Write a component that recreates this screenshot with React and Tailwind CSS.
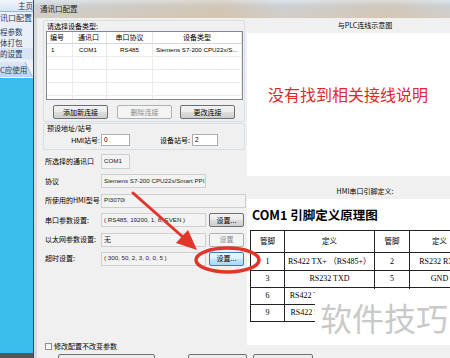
import React from "react";

const ui = "font-['Liberation_Sans','Noto_Sans_CJK_SC',sans-serif]";
const cjk = "font-['Noto_Sans_CJK_SC',sans-serif]";
const serif = "font-['Liberation_Serif','Noto_Sans_CJK_SC',serif]";

const btnBase =
  "h-[14px] shrink-0 rounded-[2px] border flex items-center justify-center text-[7px] leading-none";
const btnLook = {
  normal:
    "border-[#707070] bg-[linear-gradient(#f2f2f2,#ebebeb_50%,#dddddd_50%,#cfcfcf)] text-black",
  disabled: "border-[#adb2b5] bg-[#f4f4f4] text-[#8a8a8a]",
  hot: "border-[#3c7fb1] bg-[linear-gradient(#eaf6fd,#d9f0fc_50%,#bee6fd_50%,#a7d9f5)] text-black",
};

function WinButton({ label, kind = "normal", className = "" }) {
  return <div className={`${btnBase} ${btnLook[kind]} ${className}`}>{label}</div>;
}

function Sidebar() {
  return (
    <div className={`w-[33px] shrink-0 flex flex-col ${cjk} text-[7.5px] text-[#1d3a63]`}>
      <div className="h-[12px] bg-[linear-gradient(#f3f7fc,#d5e3f3)] border-b border-[#9fb7d4] flex items-center pl-[18px] leading-none">
        主页
      </div>
      <div className="h-[50px] bg-[#e8eff8] flex flex-col overflow-hidden leading-none">
        <div className="h-[11px] flex items-center whitespace-nowrap text-[8px]">讯口配置</div>
        <div className="h-[3px]" />
        <div className="h-[11px] flex items-center whitespace-nowrap">程参数</div>
        <div className="h-[11px] flex items-center whitespace-nowrap">体打包</div>
        <div className="h-[11px] flex items-center whitespace-nowrap bg-[#d7e4f3]">的设置</div>
      </div>
      <div className="relative h-[16px] bg-[linear-gradient(#dbe8f7,#bcd3ee)] flex items-center leading-none border-b border-white overflow-hidden">
        <span className="whitespace-nowrap">C应使用</span>
        <svg className="absolute right-0 top-0" width="10" height="16">
          <polygon points="2,0 10,0 10,16" fill="#eaf2fb" />
          <line x1="2" y1="0" x2="10" y2="16" stroke="#9fb7d4" />
        </svg>
      </div>
      <div className="flex-1 bg-[#3abdea]" />
      <div className="h-[5px] bg-[#4f565e]" />
    </div>
  );
}

function ListView() {
  const cols = ["w-[26px]", "w-[34px]", "w-[46px]", "w-[89px]"];
  const head = [
    ["编号", "justify-start pl-[3px]"],
    ["通讯口", "justify-start pl-[5px]"],
    ["串口协议", "justify-center"],
    ["设备类型", "justify-center"],
  ];
  const first = [
    ["1", "justify-start pl-[4px]"],
    ["COM1", "justify-start pl-[6px]"],
    ["RS485", "justify-center"],
    ["Siemens S7-200 CPU22x/S...", "justify-start pl-[3px]"],
  ];
  return (
    <div className="ml-[2px] w-[197px] h-[69px] border border-[#828790] bg-white overflow-hidden">
      <div className="h-[12px] flex border-b border-[#d5d5d5]">
        {head.map(([t, a], i) => (
          <div key={t} className={`${cols[i]} flex items-center ${a} border-r border-[#e5e5e5] text-[7px] leading-none ${cjk}`}>
            {t}
          </div>
        ))}
      </div>
      <div className="h-[13px] flex border-b border-[#ececec]">
        {first.map(([t, a], i) => (
          <div key={t} className={`${cols[i]} flex items-center ${a} border-r border-[#ececec] text-[6.2px] leading-none whitespace-nowrap overflow-hidden`}>
            {t}
          </div>
        ))}
      </div>
      {[0, 1, 2, 3].map((r) => (
        <div key={r} className="h-[13px] flex border-b border-[#ececec]">
          {cols.map((w, i) => (
            <div key={i} className={`${w} border-r border-[#ececec]`} />
          ))}
        </div>
      ))}
    </div>
  );
}

const fieldBox =
  "h-[14px] border border-[#cfcfcf] bg-[#f3f3f3] flex items-center pl-[2px] text-[6.2px] text-[#222] whitespace-nowrap overflow-hidden leading-none";

function Row({ h, label, children }) {
  return (
    <div className={`${h} flex items-center`}>
      <div className={`w-[64px] shrink-0 pl-[8px] text-[7px] leading-none whitespace-nowrap ${cjk}`}>{label}</div>
      {children}
    </div>
  );
}

function LeftForm() {
  return (
    <div className="w-[210px] shrink-0 flex flex-col text-black">
      <div className="mt-[2px] ml-[6px] w-[202px] h-[102px] border border-[#d5dfe5] rounded-[2px] flex flex-col">
        <div className={`h-[10px] pl-[3px] text-[7px] leading-[10px] ${cjk}`}>请选择设备类型:</div>
        <ListView />
        <div className={`mt-[5px] flex pl-[9px] ${cjk}`}>
          <WinButton label="添加新连接" className="w-[55px]" />
          <WinButton label="删除连接" kind="disabled" className="w-[55px] ml-[9px]" />
          <WinButton label="更改连接" className="w-[55px] ml-[8px]" />
        </div>
      </div>

      <div className="mt-[1px] ml-[6px] w-[202px] h-[27px] border border-[#d5dfe5] rounded-[2px] flex flex-col">
        <div className={`h-[7px] mt-[1px] pl-[3px] text-[7px] leading-[7px] ${cjk}`}>预设地址/站号</div>
        <div className="mt-[2px] flex items-center h-[12px]">
          <div className="w-[56px] text-right text-[7px] leading-none">HMI站号:</div>
          <div className="ml-[1px] w-[29px] h-[12px] border border-[#abadb3] bg-white flex items-center pl-[2px] text-[6.5px] leading-none">0</div>
          <div className={`w-[60px] text-right text-[7px] leading-none ${cjk}`}>设备站号:</div>
          <div className="ml-[2px] w-[26px] h-[12px] border border-[#abadb3] bg-white flex items-center pl-[2px] text-[6.5px] leading-none">2</div>
        </div>
      </div>

      <div className="mt-[2px] flex flex-col">
        <Row h="h-[19px]" label="所选择的通讯口">
          <div className={`${fieldBox} w-[29px] h-[15px]`}>COM1</div>
        </Row>
        <Row h="h-[20px]" label="协议">
          <div className={`${fieldBox} w-[105px]`}>Siemens S7-200 CPU22x/Smart PPI</div>
        </Row>
        <Row h="h-[19px]" label="所使用的HMI型号">
          <div className={`${fieldBox} w-[145px] h-[13px]`}>PI3070i</div>
        </Row>
        <Row h="h-[20px]" label="串口参数设置:">
          <div className={`${fieldBox} w-[105px]`}>( RS485, 19200, 1, 8, EVEN )</div>
          <WinButton label="设置..." className={`w-[35px] ml-[3px] ${cjk}`} />
        </Row>
        <Row h="h-[19px]" label="以太网参数设置:">
          <div className={`${fieldBox} w-[105px] ${cjk} text-[7px]`}>无</div>
          <WinButton label="设置" kind="disabled" className={`w-[35px] ml-[3px] ${cjk}`} />
        </Row>
        <Row h="h-[19px]" label="超时设置:">
          <div className={`${fieldBox} w-[105px]`}>( 300, 50, 2, 3, 0, 0, 5 )</div>
          <WinButton label="设置..." kind="hot" className={`w-[35px] ml-[3px] h-[12px] ${cjk}`} />
        </Row>
      </div>

      <div className="flex-1" />
      <div className="h-[7px] mb-[4px] flex items-center pl-[8px]">
        <div className="w-[7px] h-[7px] border border-[#8f8f8f] bg-[linear-gradient(#f0f0f0,#fafafa)]" />
        <span className={`ml-[2px] text-[7px] leading-none ${cjk}`}>修改配置不改变参数</span>
      </div>
    </div>
  );
}

function PinTable() {
  const rows = [
    ["1", "RS422 TX+ （RS485+）", "2", "RS232 RXD"],
    ["3", "RS232 TXD", "5", "GND"],
    ["6", "RS422 TX- （RS485-）", "7", "RS422 RX-"],
    ["9", "RS422 RX-（RS485-）", "8", ""],
  ];
  const heights = ["h-[18px]", "h-[17px]", "h-[17px]", "h-[17px]"];
  const cell = "border border-[#222] text-center align-middle p-0 whitespace-nowrap overflow-hidden";
  return (
    <table className={`ml-[3px] mt-[8px] border-collapse table-fixed w-[219px] text-[8px] leading-none ${serif}`}>
      <colgroup>
        <col className="w-[34px]" />
        <col className="w-[90px]" />
        <col className="w-[35px]" />
        <col className="w-[60px]" />
      </colgroup>
      <tbody>
        <tr className="h-[22px]">
          {["管脚", "定义", "管脚", "定义"].map((t, i) => (
            <td key={i} className={`${cell} text-[7.5px]`}>{t}</td>
          ))}
        </tr>
        {rows.map((r, i) => (
          <tr key={i} className={heights[i]}>
            {r.map((t, j) => (
              <td key={j} className={cell}>{t}</td>
            ))}
          </tr>
        ))}
      </tbody>
    </table>
  );
}

function RightPanel() {
  return (
    <div className={`w-[236px] shrink-0 flex flex-col ${cjk}`}>
      <div className="h-[15px] flex items-center justify-center text-[7px] leading-none">与PLC连线示意图</div>
      <div className="h-[143px] bg-white pt-[53px] pl-[21px] text-[16px] leading-[16px] text-[#e02a2a] whitespace-nowrap">
        没有找到相关接线说明
      </div>
      <div className="h-[23px] pt-[11px] text-center text-[7px] leading-[8px]">HMI串口引脚定义:</div>
      <div className="h-[146px] bg-white overflow-hidden">
        <div className="pt-[9px] pl-[5px] text-[12.5px] leading-[14px] font-bold text-black whitespace-nowrap">
          COM1 引脚定义原理图
        </div>
        <PinTable />
      </div>
    </div>
  );
}

function Dialog() {
  return (
    <div className="flex-1 min-w-0 flex flex-col border-l border-[#3d4650]">
      <div className={`h-[18px] shrink-0 flex items-center pl-[6px] text-[7.5px] leading-none text-[#1c1c1c] ${cjk} bg-[linear-gradient(90deg,transparent,rgba(225,165,90,0.22)_45%,transparent_60%,rgba(225,165,90,0.18)_85%,transparent),linear-gradient(180deg,#dde5ed,#cbcfd3_35%,#d3cec5)]`}>
        通讯口配置
      </div>
      <div className="flex-1 min-h-0 flex">
        <div className="w-[3px] shrink-0 bg-[#d6dadf]" />
        <div className="flex-1 min-w-0 flex flex-col bg-[#f0f0f0] overflow-hidden">
          <div className="h-[336px] shrink-0 flex">
            <LeftForm />
            <RightPanel />
          </div>
          <div className={`flex ${cjk}`}>
            <div className="ml-[21px] w-[97px] h-[20px] rounded-[2px] border border-[#707070] bg-[#ececec]" />
            <div className="ml-[33px] w-[59px] h-[20px] rounded-[2px] border border-[#707070] bg-[#ececec]" />
            <div className="ml-[6px] w-[60px] h-[20px] rounded-[2px] border border-[#707070] bg-[#ececec]" />
          </div>
        </div>
      </div>
    </div>
  );
}

export default function App() {
  return (
    <div className={`relative w-[450px] h-[358px] overflow-hidden flex bg-[#3abdea] ${ui}`}>
      <Sidebar />
      <Dialog />
      <div className={`absolute left-[315px] top-[289px] w-[135px] h-[55px] bg-white pl-[5px] pt-[10px] text-[32px] leading-[36px] text-[#c9c9c9] whitespace-nowrap ${cjk}`}>
        软件技巧
      </div>
      <svg className="absolute inset-0 pointer-events-none" width="450" height="358">
        <ellipse cx="227.5" cy="260" rx="31.5" ry="12" fill="none" stroke="#e3342a" strokeWidth="3.5" />
        <line x1="133" y1="193" x2="184" y2="238" stroke="#e3342a" strokeWidth="3" strokeLinecap="round" />
        <polygon points="197,250 176,243 188,230" fill="#e3342a" />
      </svg>
    </div>
  );
}
